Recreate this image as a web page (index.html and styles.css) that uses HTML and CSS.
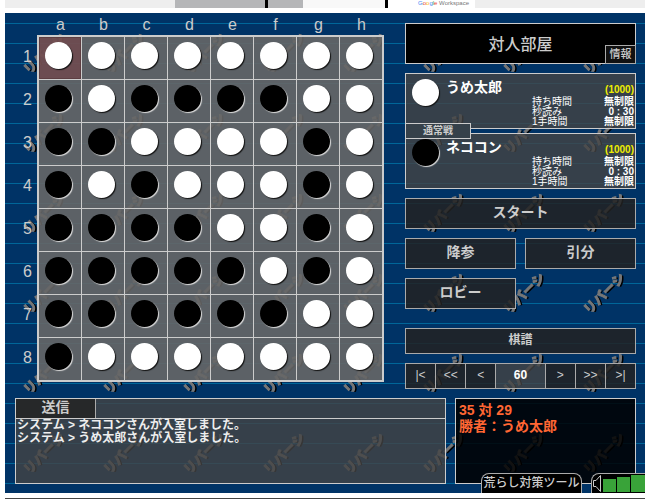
FILE: index.html
```
<!DOCTYPE html>
<html lang="ja">
<head>
    <meta charset="UTF-8">
    <meta name="viewport" content="width=device-width, initial-scale=1.0">
    <title>リバーシ 対人部屋</title>
    <link rel="stylesheet" href="styles.css">
</head>
<body>
    <div class="ad">
        <div class="ad-photo"></div>
        <div class="ad-panel"></div>
        <div class="ad-logo"><span class="g-blue">G</span><span class="g-red">o</span><span class="g-yellow">o</span><span class="g-blue">g</span><span class="g-green">l</span><span class="g-red">e</span> Workspace</div>
    </div>

    <main class="game">
        <svg class="backdrop" width="100%" height="100%" aria-hidden="true">
            <defs>
                <pattern id="tile" width="80" height="80" patternUnits="userSpaceOnUse">
                    <path d="M0 10.5H80M0 30.5H80M0 50.5H80M0 70.5H80" stroke="#069" />
                    <g transform="translate(39 40) rotate(-45)" class="tile-text">
                        <text x="1" y="7" fill="#000">リバーシ</text>
                        <text x="0" y="5" fill="#777" stroke="#777">リバーシ</text>
                    </g>
                </pattern>
            </defs>
            <rect width="100%" height="100%" fill="url(#tile)" />
        </svg>

        <div class="play">
            <div class="board-area">
                <div class="cols" id="cols"></div>
                <div class="rows" id="rows"></div>
                <div class="board" id="board"></div>
            </div>

            <div class="side">
                <header class="title">
                    <h1>対人部屋</h1>
                    <button class="info">情報</button>
                </header>

                <section class="players">
                    <div class="player">
                        <span class="disc white"></span>
                        <h2>うめ太郎</h2>
                        <div class="stats">
                            <span class="rate">(1000)</span>
                            <span class="key">持ち時間</span><span>無制限</span>
                            <span class="key">秒読み</span><span>0 : 30</span>
                            <span class="key">1手時間</span><span>無制限</span>
                        </div>
                    </div>
                    <div class="mode">通常戦</div>
                    <div class="player">
                        <span class="disc black"></span>
                        <h2>ネココン</h2>
                        <div class="stats">
                            <span class="rate">(1000)</span>
                            <span class="key">持ち時間</span><span>無制限</span>
                            <span class="key">秒読み</span><span>0 : 30</span>
                            <span class="key">1手時間</span><span>無制限</span>
                        </div>
                    </div>
                </section>

                <div class="actions">
                    <button class="wide">スタート</button>
                    <button>降参</button>
                    <button>引分</button>
                    <button>ロビー</button>
                </div>

                <button class="record">棋譜</button>
                <div class="nav">
                    <button>|&lt;</button>
                    <button>&lt;&lt;</button>
                    <button>&lt;</button>
                    <output class="move">60</output>
                    <button>&gt;</button>
                    <button>&gt;&gt;</button>
                    <button>&gt;|</button>
                </div>
            </div>
        </div>

        <div class="bottom">
            <section class="chat">
                <div class="chat-bar">
                    <button class="send">送信</button>
                    <input type="text" class="message" aria-label="メッセージ">
                </div>
                <div class="log">
                    <p>システム &gt; ネココンさんが入室しました。</p>
                    <p>システム &gt; うめ太郎さんが入室しました。</p>
                </div>
            </section>
            <section class="result">
                <p>35 対 29</p>
                <p>勝者：うめ太郎</p>
            </section>
        </div>

        <div class="tabs">
            <button class="tool">荒らし対策ツール</button>
            <button class="volume" aria-label="音量">
                <svg width="53" height="19" viewBox="0 0 53 19">
                    <path d="M1.5 6.5H4L8.5 1.5V17.5L4 12.5H1.5Z" fill="#000" stroke="#ccc" />
                    <path d="M11 5H24V18H11ZM25 3H38V18H25ZM39 1H53V18H39Z" fill="#39a339" />
                </svg>
            </button>
        </div>
    </main>

    <hr class="end">

    <script src="script.js"></script>
</body>
</html>
```
FILE: styles.css
```
* {
    box-sizing: border-box;
}
body {
    margin: 0 6px 0 5px;
    background: #fff;
    color: #ccc;
    font-family: "Liberation Sans", "Noto Sans CJK JP", sans-serif;
    overflow: hidden;
}
h1, h2, p {
    margin: 0;
}
button {
    padding: 0;
    background: rgba(34, 34, 34, 0.85);
    border: 1px solid #aaa;
    color: #ccc;
    font-family: inherit;
    font-weight: bold;
    cursor: pointer;
}

/* 広告 */
.ad {
    display: flex;
    height: 8px;
    margin-bottom: 5px;
    padding-left: 170px;
    background: #eee;
}
.ad-photo {
    width: 128px;
    background: linear-gradient(#000, #000) 90px 0 / 3px 8px no-repeat #b5b6b8;
}
.ad-panel {
    width: 85px;
    background: #f8f8f8;
    border-right: 3px solid #000;
}
.ad-logo {
    width: 87px;
    padding-left: 24px;
    background: #fff;
    color: #777;
    font-size: 6px;
    line-height: 6px;
    text-align: center;
    white-space: nowrap;
}
.g-blue { color: #4285f4; }
.g-red { color: #ea4335; }
.g-yellow { color: #fbbc05; }
.g-green { color: #34a853; }

/* ゲーム画面 */
.game {
    position: relative;
    padding: 0 9px 9px 10px;
    background: #036;
}
.backdrop {
    position: absolute;
    top: 0;
    left: 0;
}
.tile-text {
    font-family: "Noto Sans CJK JP", sans-serif;
    font-size: 13px;
    font-weight: bold;
    text-anchor: middle;
}
.play {
    position: relative;
    display: flex;
    gap: 21px;
}

/* 盤面 */
.board-area {
    display: grid;
    grid-template-columns: 22px 347px;
    grid-template-rows: 22px 347px;
}
.cols {
    grid-column: 2;
    display: grid;
    grid-template-columns: repeat(8, 43px);
    padding-left: 2px;
    font-size: 16px;
    line-height: 24px;
    text-align: center;
}
.rows {
    grid-row: 2;
    display: grid;
    grid-template-rows: repeat(8, 43px);
    padding-right: 5px;
    font-size: 16px;
    line-height: 43px;
    text-align: right;
}
.board {
    display: grid;
    grid-template-columns: repeat(8, 43px);
    grid-template-rows: repeat(8, 43px);
    border: 1px solid #ccc;
    border-width: 2px 1px 1px 2px;
}
.cell {
    padding: 5px 6px;
    background: rgba(102, 102, 102, 0.9);
    border: 1px solid #ccc;
    border-width: 0 1px 1px 0;
}
.cell.last {
    background: rgba(114, 78, 80, 0.95);
    box-shadow: inset 0 0 0 1px #5d3e42;
}
.disc {
    display: block;
    width: 27px;
    height: 27px;
    border-radius: 50%;
}
.disc.white {
    background: #fff;
    box-shadow: 1px 1px 1px #111;
}
.disc.black {
    background: #000;
    box-shadow: 1px 1px 1px #ddd;
}

/* 右側 */
.side {
    flex: 1;
    padding-top: 10px;
}
.title {
    display: flex;
    justify-content: flex-end;
    align-items: flex-end;
    position: relative;
    height: 41px;
    margin-bottom: 9px;
    background: #000;
    border: 1px solid #ccc;
}
.title h1 {
    position: absolute;
    inset: 0;
    font-size: 16px;
    font-weight: 500;
    line-height: 42px;
    text-align: center;
}
.info {
    position: relative;
    width: 31px;
    height: 19px;
    margin: 0 -1px -1px 0;
    background: #111;
    font-size: 11px;
    font-weight: 500;
    line-height: 15px;
}
.players {
    margin-bottom: 9px;
}
.player {
    display: flex;
    height: 56px;
    padding: 5px 1px 0 6px;
    background: rgba(68, 68, 68, 0.8);
    border: 1px solid #ccc;
    color: #fff;
    font-weight: bold;
}
.player h2 {
    flex: 1;
    margin-left: 7px;
    font-size: 14px;
    line-height: 16px;
}
.stats {
    display: grid;
    grid-template-columns: 62px 40px;
    grid-template-rows: 12px;
    grid-auto-rows: 10px;
    margin-top: 5px;
    font-size: 10px;
    line-height: 11px;
    text-align: right;
}
.rate {
    grid-column: 2;
    color: #ee0;
}
.key {
    font-weight: normal;
    text-align: left;
}
.mode {
    position: relative;
    width: 66px;
    height: 16px;
    margin: -6px 0;
    background: #36414a;
    border: 1px solid #ccc;
    font-size: 10px;
    font-weight: bold;
    line-height: 14px;
    text-align: center;
}
.actions {
    display: grid;
    grid-template-columns: 1fr 1fr;
    grid-auto-rows: 31px;
    gap: 9px;
    margin-bottom: 19px;
}
.actions button {
    padding-bottom: 4px;
    font-size: 14px;
    line-height: 24px;
}
.actions .wide {
    grid-column: span 2;
}
.record {
    display: block;
    width: 100%;
    height: 26px;
    margin-bottom: 9px;
    padding-bottom: 2px;
    font-size: 12px;
    line-height: 20px;
}
.nav {
    display: flex;
    height: 26px;
}
.nav button {
    flex: 3;
    margin-right: -1px;
    padding-bottom: 2px;
    font-size: 12px;
    font-weight: normal;
}
.nav button:last-child {
    margin-right: 0;
}
.move {
    flex: 5;
    margin-right: -1px;
    background: rgba(68, 68, 68, 0.8);
    border: 1px solid #aaa;
    color: #fff;
    font-size: 12px;
    font-weight: bold;
    line-height: 23px;
    text-align: center;
}

/* 下側 */
.bottom {
    position: relative;
    display: grid;
    grid-template-columns: 431fr 181fr;
    gap: 9px;
    height: 86px;
    margin-top: 9px;
}
.chat {
    background: rgba(68, 68, 68, 0.8);
    border: 1px solid #ccc;
}
.chat-bar {
    display: flex;
    height: 20px;
    border-bottom: 1px solid #ccc;
}
.send {
    width: 80px;
    padding-bottom: 3px;
    background: #262829;
    border-width: 0 1px 0 0;
    font-size: 14px;
    line-height: 16px;
}
.message {
    flex: 1;
    min-width: 0;
    background: transparent;
    border: 0;
    color: #fff;
}
.log {
    padding-left: 1px;
    color: #eee;
    font-size: 12px;
    font-weight: bold;
    line-height: 13px;
}
.result {
    padding: 3px;
    background: rgba(0, 0, 0, 0.85);
    border: 1px solid #ccc;
    color: #f63;
    font-size: 14px;
    font-weight: bold;
    line-height: 16px;
}
.tabs {
    position: absolute;
    right: 0;
    bottom: 0;
    display: flex;
    gap: 9px;
}
.tabs button {
    height: 20px;
    background: #000;
    border-width: 1px 1px 0;
    border-radius: 8px 8px 0 0;
}
.tabs .tool {
    width: 101px;
    padding-bottom: 2px;
    font-size: 12px;
    font-weight: 500;
    line-height: 16px;
}
.tabs .volume {
    width: 54px;
    border-right: 0;
    border-radius: 8px 0 0 0;
}
.volume svg {
    display: block;
}
.end {
    height: 1px;
    margin: 5px 0 0;
    background: #444;
    border: 0;
}
```
FILE: script.js
```
const discs = [
    'WWWWWWWW',
    'BWBBBBWW',
    'BBWWWWBW',
    'BWBWWWBW',
    'BBBBWWBW',
    'BBBBBWBW',
    'BBBBBBWW',
    'BWWWWWWW'
];
const lastMove = 'a1';

function drawBoard() {
    const board = document.getElementById('board');
    const cols = document.getElementById('cols');
    const rows = document.getElementById('rows');

    discs.forEach((line, y) => {
        // 座標の文字
        const col = document.createElement('span');
        col.textContent = 'abcdefgh'[y];
        cols.appendChild(col);
        const row = document.createElement('span');
        row.textContent = y + 1;
        rows.appendChild(row);

        // マスと石
        [...line].forEach((color, x) => {
            const cell = document.createElement('div');
            cell.className = 'cell';
            if ('abcdefgh'[x] + (y + 1) === lastMove) {
                cell.classList.add('last');
            }
            const disc = document.createElement('span');
            disc.className = 'disc ' + (color === 'W' ? 'white' : 'black');
            cell.appendChild(disc);
            board.appendChild(cell);
        });
    });
}

drawBoard();
```
